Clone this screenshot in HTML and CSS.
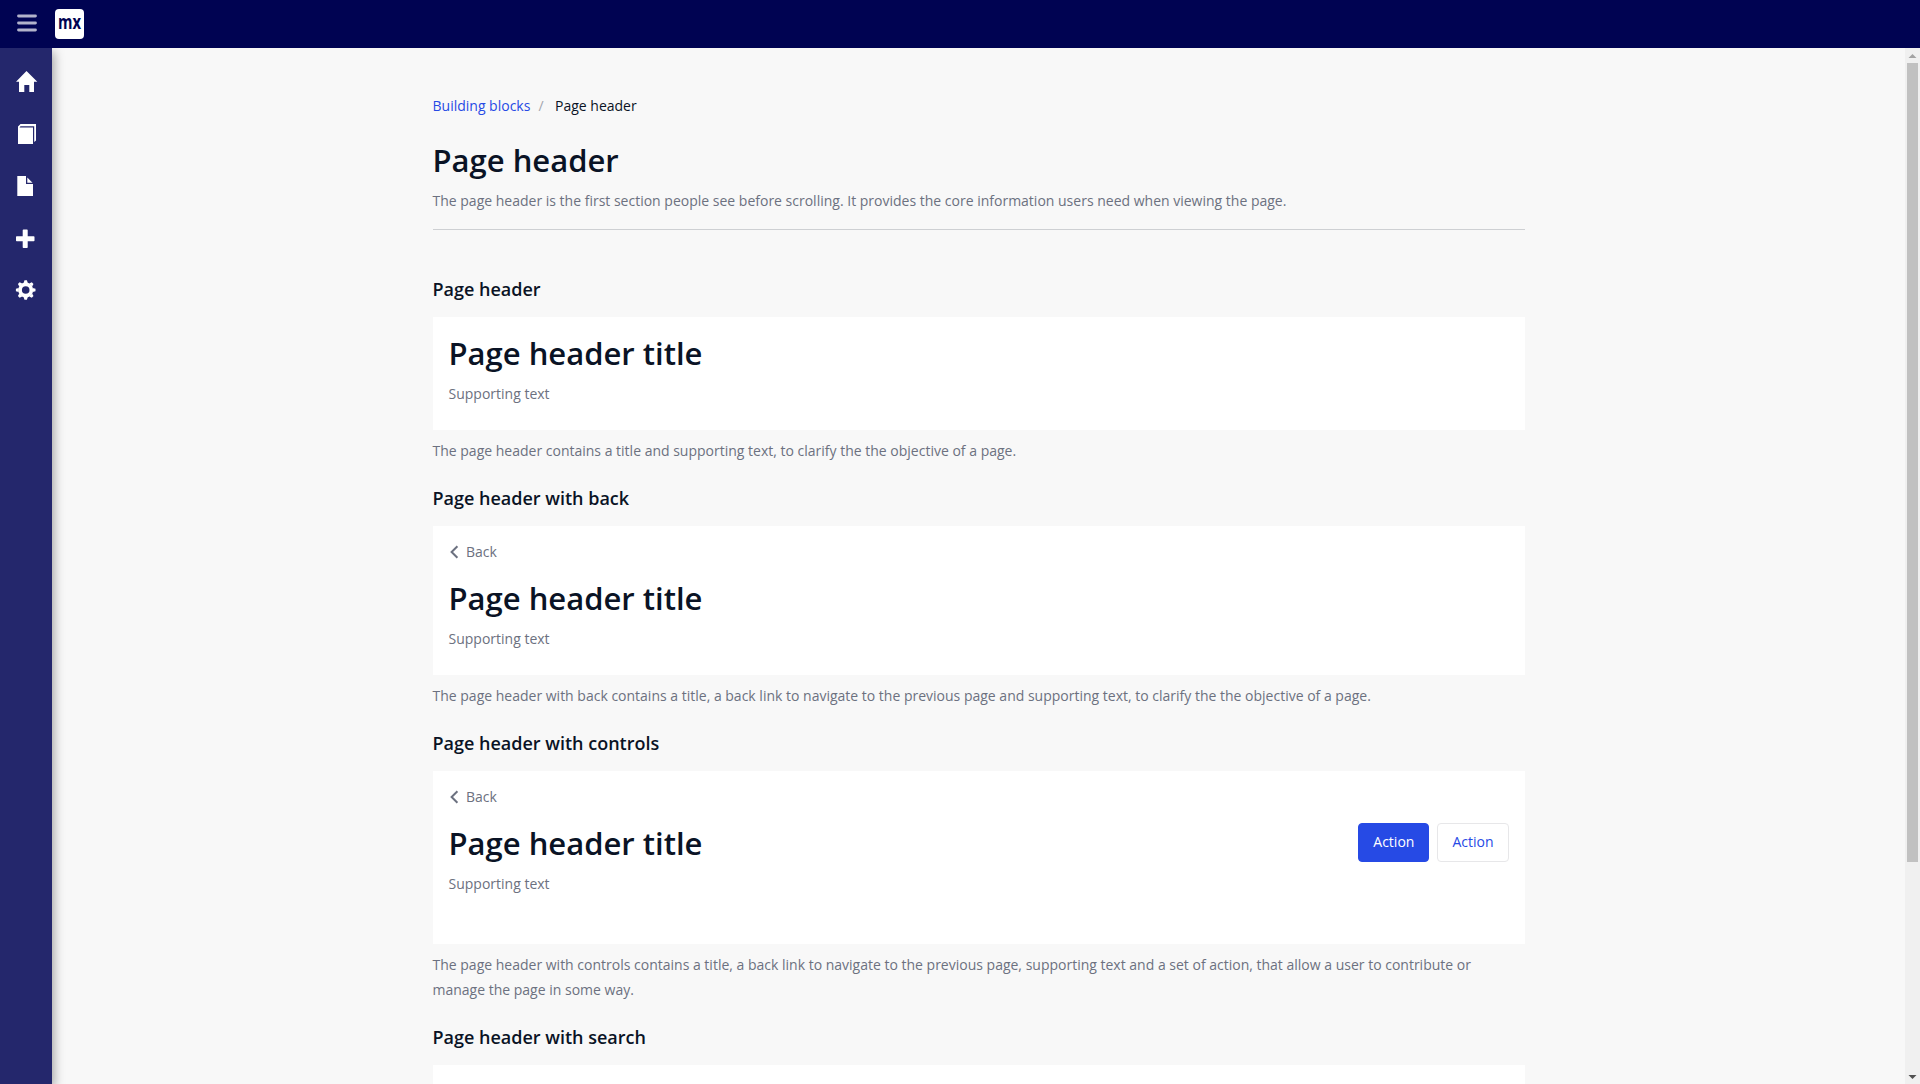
FILE: index.html
```html
<!DOCTYPE html>
<html lang="en">
<head>
<meta charset="utf-8">
<title>Page header</title>
<link rel="stylesheet" href="styles.css">
</head>
<body>
<header class="topbar">
  <svg class="burger" viewBox="0 0 20 18"><path d="M1.5 2h17M1.5 9h17M1.5 16h17"/></svg>
  <svg class="logo" viewBox="0 0 29 30"><rect width="29" height="30" rx="4"/><text x="3" y="20" textLength="23" lengthAdjust="spacingAndGlyphs">mx</text></svg>
</header>
<div class="shell">
  <nav class="side">
    <svg viewBox="0 0 52 52"><path d="M26.5 15 37.3 25.7H34V36H29.300V29H24.300V36H19V25.700H16z"/></svg>
    <svg viewBox="0 0 52 52"><path d="M18 19.500h15V36H18zM18 18.500l2.500-2.500H36v16.500l-1.800 1.500V18.200H20.500L19.500 19.500H18z"/></svg>
    <svg viewBox="0 0 52 52"><path d="M17.300 16H26v8h7v12H17.300zM27.300 17.500 32.500 22.700H27.300z"/></svg>
    <svg viewBox="0 0 52 52"><path d="M23.500 17.500h3.500q.7 0 .7.700v6h6q.8 0 .8.800v3.500q0 .8-.8.800h-6v6q0 .7-.7.700h-3.500q-.8 0-.8-.7v-6h-6q-.7 0-.7-.8V25q0-.8.7-.8h6v-6q0-.7.800-.7z"/></svg>
    <svg viewBox="0 0 52 52"><g transform="translate(25.700 26)"><circle r="5.650" class="ring"/><g id="teeth"><path d="M-2.100-7-1.200-9.800H1.200L2.100-7zM-2.100 7-1.200 9.800H1.200L2.100 7zM-7-2.100-9.800-1.200V1.200L-7 2.100zM7-2.100 9.800-1.200V1.200L7 2.100z"/></g><use href="#teeth" transform="rotate(45)"/></g></svg>
  </nav>
  <main class="main">
    <div class="content">
      <div class="crumbs"><a>Building blocks</a><i>/</i><span>Page header</span></div>
      <div class="intro">
        <h1>Page header</h1>
        <p>The page header is the first section people see before scrolling. It provides the core information users need when viewing the page.</p>
      </div>
      <h4>Page header</h4>
      <section class="card">
        <h1>Page header title</h1>
        <p>Supporting text</p>
      </section>
      <p class="note">The page header contains a title and supporting text, to clarify the the objective of a page.</p>
      <h4>Page header with back</h4>
      <section class="card">
        <div class="back"><svg viewBox="0 0 10 14"><path d="M8.400 1.200 2.600 7l5.800 5.800"/></svg>Back</div>
        <h1>Page header title</h1>
        <p>Supporting text</p>
      </section>
      <p class="note">The page header with back contains a title, a back link to navigate to the previous page and supporting text, to clarify the the objective of a page.</p>
      <h4>Page header with controls</h4>
      <section class="card controls">
        <div class="back"><svg viewBox="0 0 10 14"><path d="M8.400 1.200 2.600 7l5.800 5.800"/></svg>Back</div>
        <div class="row">
          <div><h1>Page header title</h1><p>Supporting text</p></div>
          <div class="actions"><button class="btn primary">Action</button><button class="btn">Action</button></div>
        </div>
      </section>
      <p class="note">The page header with controls contains a title, a back link to navigate to the previous page, supporting text and a set of action, that allow a user to contribute or manage the page in some way.</p>
      <h4>Page header with search</h4>
      <section class="card clipped"></section>
    </div>
  </main>
  <div class="scroll"><svg viewBox="0 0 15 15"><path d="M7.500 6 11.500 10h-8z" fill="#a3a3a3"/></svg><div class="thumb"></div><svg class="down" viewBox="0 0 15 15"><path d="M7.500 10 11.500 6h-8z" fill="#505050"/></svg></div>
</div>
</body>
</html>
```
FILE: styles.css
```css
* { box-sizing: border-box; }
body { margin: 0; height: 1084px; overflow: hidden; font: 14px/25px "Open Sans", sans-serif; color: #0a1325; background: #f8f8f8; }
h1, h4, p { margin: 0; }
h1 { font-size: 31px; line-height: 40px; font-weight: 600; }
h4 { font-size: 18px; line-height: 24px; font-weight: 600; margin-bottom: 16px; }
p { color: #6c7180; }
.topbar { height: 48px; background: #000352; display: flex; align-items: flex-start; padding: 9px 0 0 17px; gap: 18px; }
.burger { width: 20px; height: 18px; margin-top: 5px; fill: none; stroke: #b2b3cb; stroke-width: 2.8; stroke-linecap: round; }
.logo { width: 29px; height: 30px; overflow: visible; }
.logo rect { fill: #fff; }
.logo text { font: 700 20px "Open Sans", sans-serif; fill: #000352; }
.shell { display: flex; height: 1036px; }
.side { width: 52px; background: #24276c; padding-top: 8px; flex: none; box-shadow: 2px 4px 10px rgba(0, 0, 0, .35); clip-path: inset(0 -20px 0 0); }
.side svg { width: 52px; height: 52px; fill: #fff; display: block; }
.side .ring { fill: none; stroke: #fff; stroke-width: 3.7; }
.main { flex: 1; display: flex; justify-content: center; overflow: hidden; }
.content { width: 1092px; padding-top: 48px; }
.crumbs { display: flex; line-height: 20px; margin-bottom: 24px; }
.crumbs a { color: #264ae5; }
.crumbs i { font-style: normal; color: #a3a6ae; padding: 0 11.500px 0 8px; }
.intro { height: 90px; border-bottom: 1px solid #ced0d3; margin-bottom: 47px; }
h1 + p { margin-top: 8px; }
.card { background: #fff; padding: 16px 16px 24px; }
.note { margin: 8px 0 23px; }
.back { display: flex; align-items: center; height: 20px; line-height: 20px; margin-bottom: 16px; color: #6c7180; }
.back svg { width: 10px; height: 14px; margin: 0 7px 0 .5px; fill: none; stroke: #6c7180; stroke-width: 2; }
.controls { padding-bottom: 48px; }
.row { display: flex; justify-content: space-between; }
.actions { display: flex; gap: 8px; align-items: flex-start; }
.btn { height: 39px; padding: 0 14px 2px; border: 1px solid #e7e7e9; border-radius: 4px; background: #fff; color: #264ae5; font: 14px/20px "Open Sans", sans-serif; }
.btn.primary { background: #264ae5; border-color: #264ae5; color: #fff; }
.clipped { height: 19px; padding: 0; }
.scroll { width: 15px; background: #f0f0f0; display: flex; flex-direction: column; align-items: center; }
.scroll svg { width: 15px; height: 15px; flex: none; }
.thumb { width: 11px; height: 799px; background: #c1c1c1; }
.down { margin-top: auto !important; }
```
